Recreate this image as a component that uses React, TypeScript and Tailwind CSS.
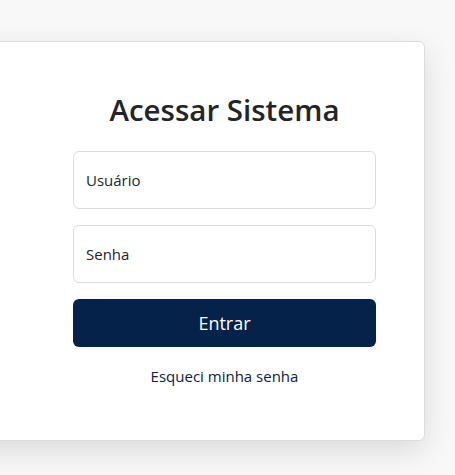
export default function App() {
  return (
    <div
      className="w-[455px] h-[475px] overflow-hidden bg-[#f8f8f8] pt-[41px]"
      style={{ fontFamily: '"Open Sans", "Noto Sans", sans-serif' }}
    >
      <div className="ml-[-35px] w-[460px] h-[400px] bg-white border border-[#dcdcdc] rounded-[6px] shadow-[0_10px_30px_rgba(0,0,0,0.12)] pl-[107px] pr-[48px] pt-[48px]">
        <div className="w-[303px]">
          <h1 className="text-center text-[29.5px] leading-[40px] font-semibold text-[#212529] mb-[21px]">
            Acessar Sistema
          </h1>
          <div className="flex flex-col gap-4">
            <input
              className="h-[58px] w-full rounded-[6px] border border-[#dcdcdc] px-[12px] text-[15px] text-[#212529] placeholder:text-[#212529] outline-none"
              placeholder="Usuário"
            />
            <input
              type="password"
              className="h-[58px] w-full rounded-[6px] border border-[#dcdcdc] px-[12px] text-[15px] text-[#212529] placeholder:text-[#212529] outline-none"
              placeholder="Senha"
            />
            <button className="h-[48px] w-full rounded-[6px] bg-[#05234a] text-white text-[18px]">
              Entrar
            </button>
          </div>
          <div className="mt-[17px] text-center text-[15px] leading-[24px] text-[#0b2140]">
            Esqueci minha senha
          </div>
        </div>
      </div>
    </div>
  )
}
